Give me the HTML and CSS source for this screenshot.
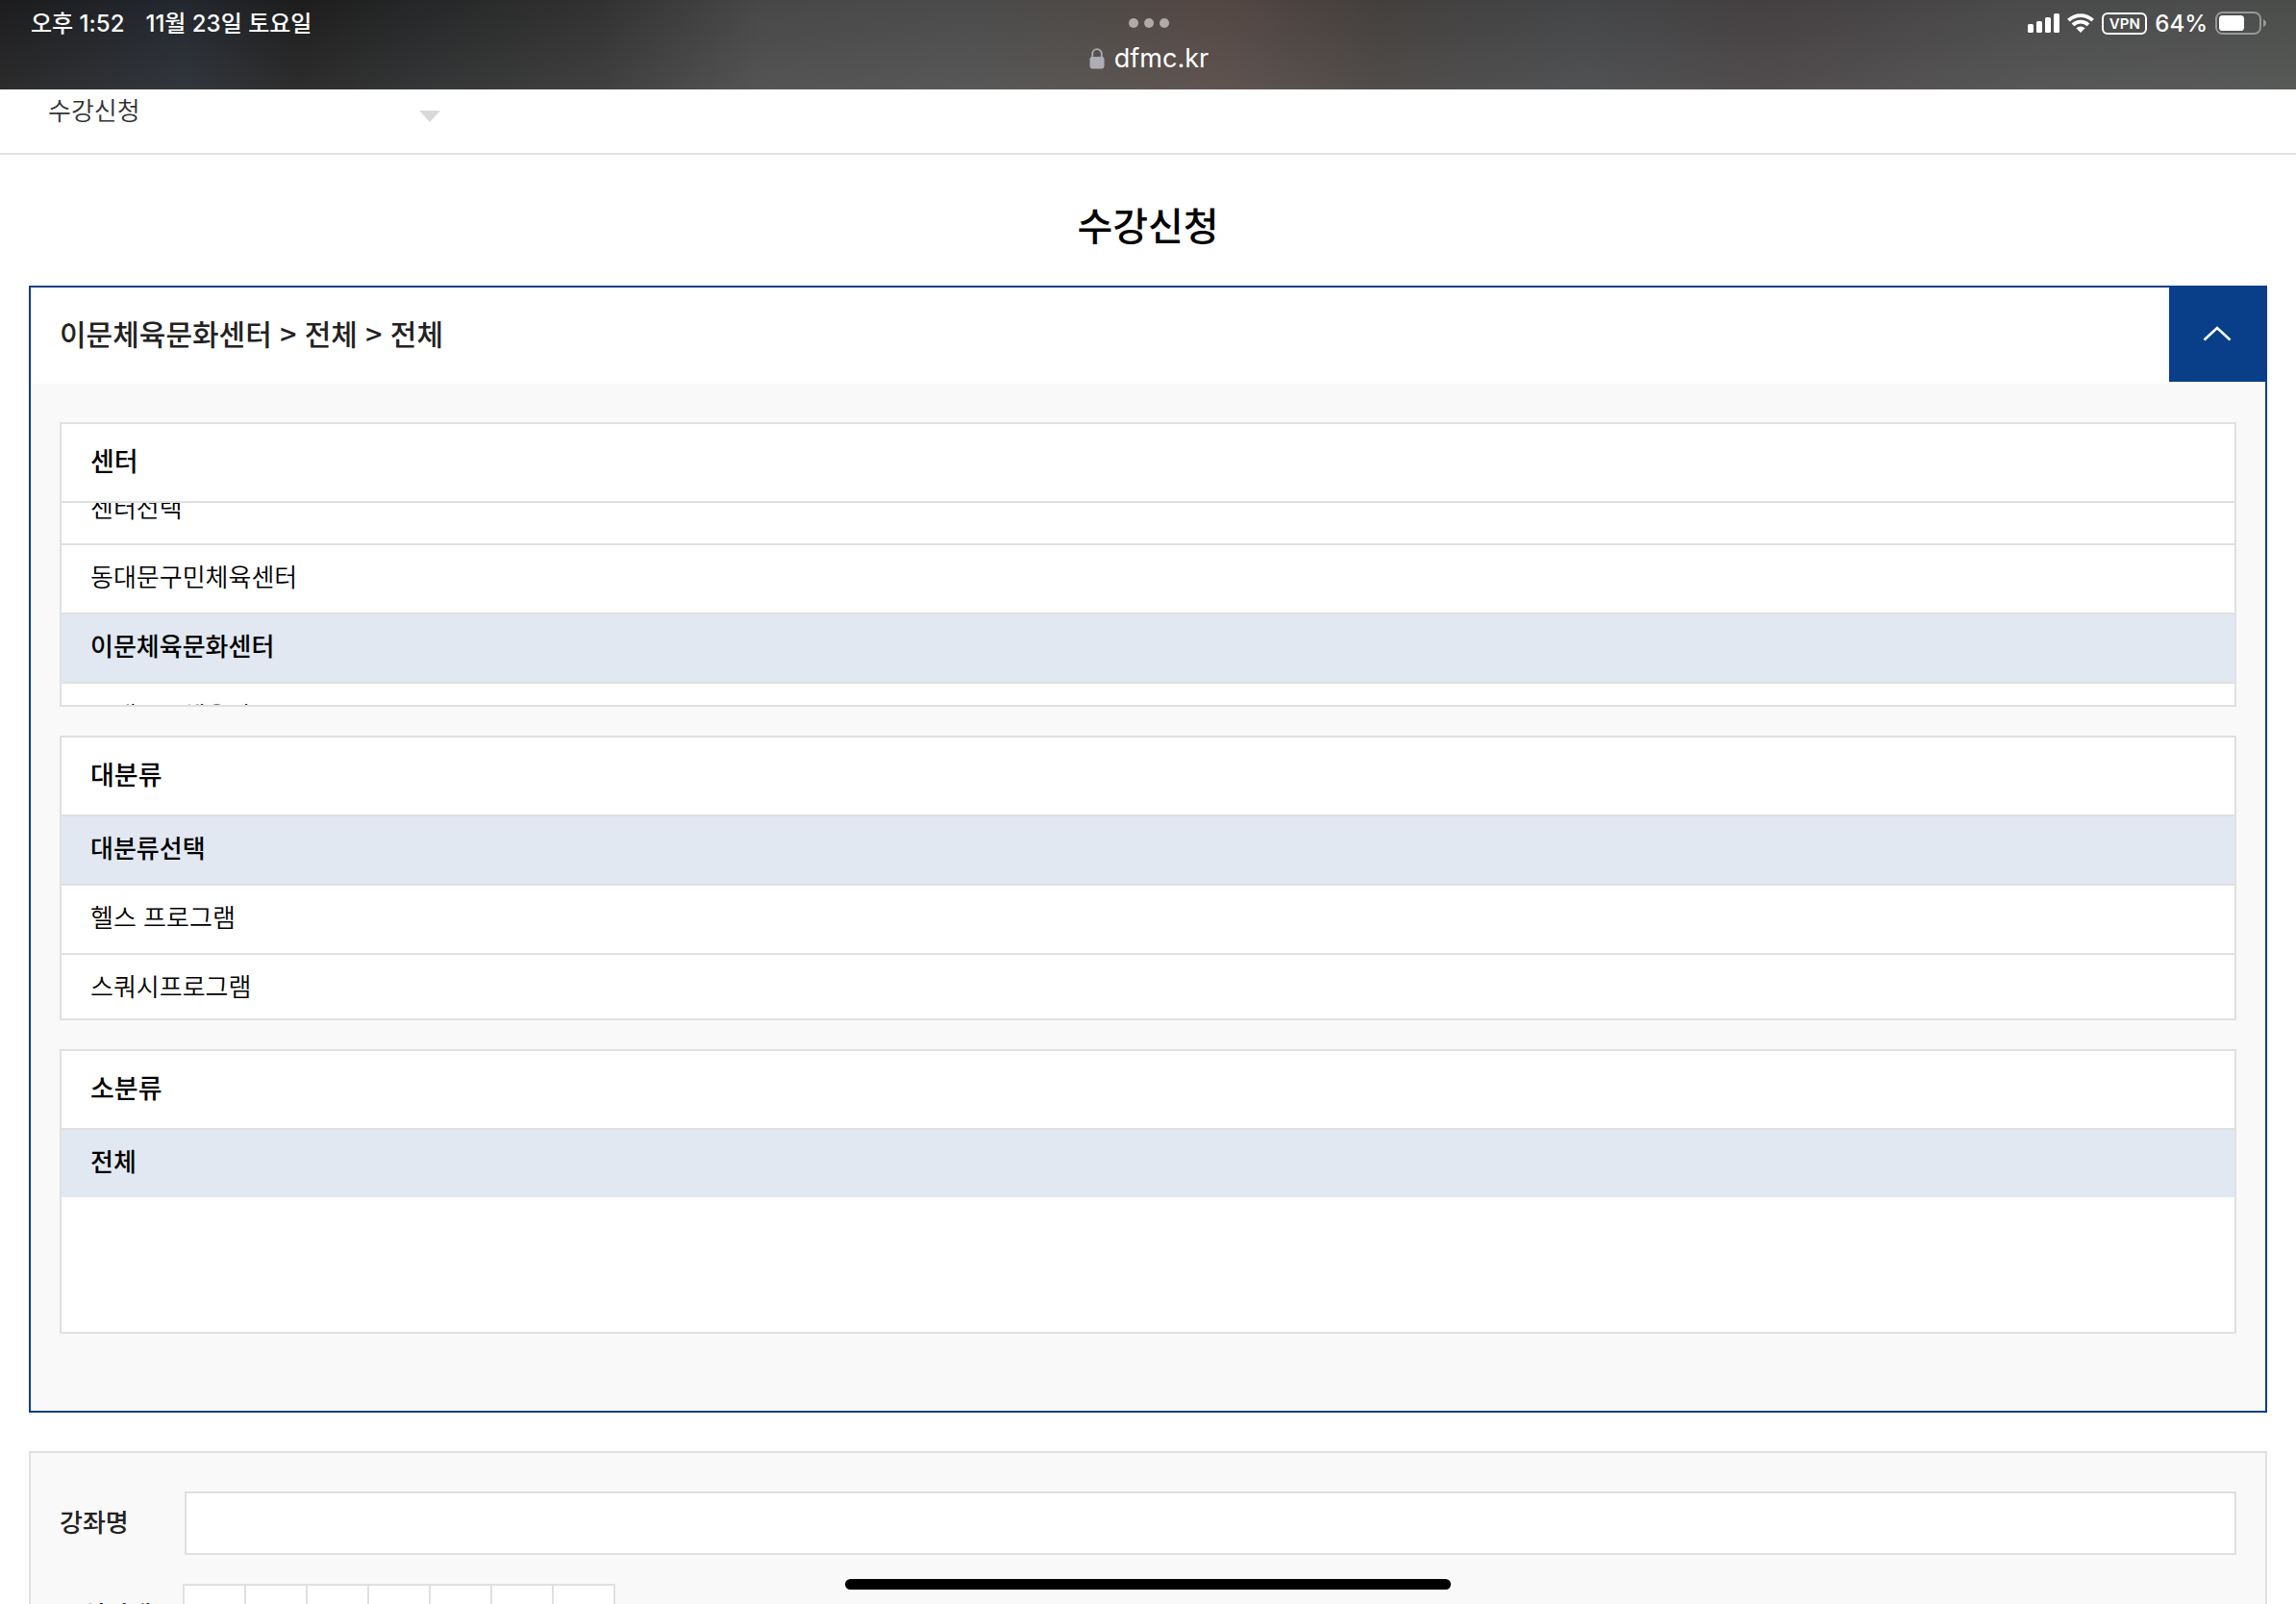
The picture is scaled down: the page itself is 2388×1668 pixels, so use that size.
FILE: index.html
```html
<!DOCTYPE html>
<html lang="ko">
<head>
    <meta charset="UTF-8">
    <title>수강신청</title>
    <link rel="stylesheet" href="styles.css">
</head>
<body>
    <header class="status-bar">
        <div class="status-left">
            <span>오후 1:52</span>
            <span>11월 23일 토요일</span>
        </div>
        <div class="status-center">
            <svg class="dots" width="42" height="10" viewBox="0 0 42 10">
                <circle cx="5" cy="5" r="5"/>
                <circle cx="21" cy="5" r="5"/>
                <circle cx="37" cy="5" r="5"/>
            </svg>
            <div class="address">
                <svg width="16" height="22" viewBox="0 0 16 22">
                    <path d="M3.2 10V6a4.8 4.8 0 0 1 9.6 0v4" fill="none" stroke="#aeacb4" stroke-width="1.8"/>
                    <rect x="0.5" y="9" width="15" height="12.5" rx="2.4" fill="#aeacb4"/>
                </svg>
                <span>dfmc.kr</span>
            </div>
        </div>
        <div class="status-right">
            <svg width="33" height="20" viewBox="0 0 33 20" fill="#fff">
                <rect x="0" y="11" width="6" height="9" rx="1.6"/>
                <rect x="9" y="8" width="6" height="12" rx="1.6"/>
                <rect x="18" y="4" width="6" height="16" rx="1.6"/>
                <rect x="27" y="0" width="6" height="20" rx="1.6"/>
            </svg>
            <svg width="28" height="20" viewBox="0 0 28 20">
                <path d="M1.4 7.2a18 18 0 0 1 25.2 0M6 11.8a11.5 11.5 0 0 1 16 0" fill="none" stroke="#fff" stroke-width="3.8"/>
                <path d="M14 20l-4.6-4.7a6.6 6.6 0 0 1 9.2 0z" fill="#fff"/>
            </svg>
            <span class="vpn">VPN</span>
            <span class="percent">64%</span>
            <svg width="54" height="24" viewBox="0 0 54 24">
                <rect x="1" y="1" width="46" height="22" rx="6.5" fill="none" stroke="#969796" stroke-width="2"/>
                <rect x="4" y="4" width="26" height="16" rx="3.6" fill="#fff"/>
                <path d="M50 8c4 1.600 4 6.400 0 8z" fill="#969796"/>
            </svg>
        </div>
    </header>

    <nav class="location">
        <div class="location-menu">
            <select aria-label="메뉴">
                <option>수강신청</option>
            </select>
            <svg width="22" height="12" viewBox="0 0 22 12"><path d="M0 0h22L11 12z" fill="#d9d9d9"/></svg>
        </div>
    </nav>

    <main class="content">
        <h1>수강신청</h1>

        <section class="finder">
            <div class="finder-top">
                <p>이문체육문화센터 &gt; 전체 &gt; 전체</p>
                <button type="button" class="toggle" aria-label="접기">
                    <svg width="30" height="16" viewBox="0 0 30 16"><path d="M1.500 14.500L15 2l13.500 12.500" fill="none" stroke="#fff" stroke-width="2.600"/></svg>
                </button>
            </div>
            <div class="finder-body">
                <div class="box">
                    <h2>센터</h2>
                    <ul id="centerList">
                        <li><a href="#">센터선택</a></li>
                        <li><a href="#">동대문구민체육센터</a></li>
                        <li class="on"><a href="#">이문체육문화센터</a></li>
                        <li><a href="#">동대문구체육관</a></li>
                    </ul>
                </div>
                <div class="box">
                    <h2>대분류</h2>
                    <ul>
                        <li class="on"><a href="#">대분류선택</a></li>
                        <li><a href="#">헬스 프로그램</a></li>
                        <li><a href="#">스쿼시프로그램</a></li>
                    </ul>
                </div>
                <div class="box">
                    <h2>소분류</h2>
                    <ul>
                        <li class="on"><a href="#">전체</a></li>
                    </ul>
                </div>
            </div>
        </section>

        <form class="search">
            <div class="row">
                <label class="name" for="lecture">강좌명</label>
                <input type="text" id="lecture" class="text">
            </div>
            <div class="row">
                <span class="name">요일선택</span>
                <div class="days">
                    <label><input type="checkbox">월</label>
                    <label><input type="checkbox">화</label>
                    <label><input type="checkbox">수</label>
                    <label><input type="checkbox">목</label>
                    <label><input type="checkbox">금</label>
                    <label><input type="checkbox">토</label>
                    <label><input type="checkbox">일</label>
                </div>
            </div>
        </form>
    </main>

    <div class="home-bar"></div>

    <script>
        // bring the selected center into view
        document.getElementById("centerList").scrollTop = 28;
    </script>
</body>
</html>
```
FILE: styles.css
```css
*
{
    margin: 0;
    padding: 0;
    box-sizing: border-box;
}

body
{
    display: flex;
    flex-direction: column;
    height: 100vh;
    overflow: hidden;
    position: relative;
    background: #fff;
    color: #000;
    font-family: "Noto Sans CJK KR", sans-serif;
    font-size: 26px;
    font-weight: 350;
}
ul
{
    list-style: none;
}
a
{
    color: inherit;
    text-decoration: none;
}
svg
{
    display: block;
}

/* status bar */
.status-bar
{
    display: grid;
    grid-template-columns: 1fr auto 1fr;
    flex: none;
    height: 93px;
    padding: 0 30px 0 32px;
    background:
        linear-gradient(to bottom, rgba(255, 255, 255, 0), rgba(255, 255, 255, 0.07)),
        linear-gradient(to right, #1c1c1d 0%, #23272e 8%, #1d1d1d 13%, #252627 18%, #313131 26%, #474747 33%, #4b4b4b 42%, #4e4946 48%, #544743 53%, #433f3d 60%, #434547 69%, #443f40 77%, #4a4a4b 88%, #4b4d4b 100%);
    color: #fff;
    font-family: Inter, "Noto Sans CJK KR", sans-serif;
    font-size: 24px;
    font-weight: 500;
}
.status-left, .status-right
{
    display: flex;
    align-items: center;
    height: 48px;
}
.status-left
{
    gap: 22px;
    padding-bottom: 4px;
}
.status-right
{
    justify-content: flex-end;
    gap: 8px;
}
.status-center
{
    display: flex;
    flex-direction: column;
    align-items: center;
    padding-top: 19px;
}
.dots
{
    fill: #b0aba8;
}
.address
{
    display: flex;
    align-items: center;
    gap: 10px;
    margin-top: 14px;
    font-size: 27px;
    font-weight: 400;
    line-height: 36px;
}
.vpn
{
    width: 47px;
    height: 23px;
    border: 2px solid #fff;
    border-radius: 6px;
    font-size: 15px;
    font-weight: 600;
    line-height: 19px;
    text-align: center;
}

/* location */
.location
{
    flex: none;
    padding: 0 50px 22px;
    border-bottom: 2px solid #e0e0e0;
}
.location-menu
{
    display: grid;
    width: 408px;
}
.location-menu select, .location-menu svg
{
    grid-area: 1 / 1;
}
.location-menu select
{
    height: 44px;
    padding-bottom: 4px;
    border: 0;
    background: none;
    color: #333;
    font: inherit;
    appearance: none;
}
.location-menu svg
{
    align-self: end;
    justify-self: end;
    margin-bottom: 10px;
    pointer-events: none;
}

/* content */
.content
{
    flex: 1;
    min-height: 0;
    padding: 0 30px;
    overflow: hidden;
}
h1
{
    padding: 42px 0 34px;
    font-size: 40px;
    font-weight: 500;
    line-height: 60px;
    text-align: center;
}
.finder
{
    border: 2px solid #083f88;
    background: #f9f9f9;
}
.finder-top
{
    display: flex;
    justify-content: space-between;
    height: 100px;
    padding-left: 30px;
    background: #fff;
    color: #222;
    font-size: 30px;
    font-weight: 500;
    line-height: 94px;
}
.toggle
{
    display: flex;
    align-items: center;
    justify-content: center;
    width: 100px;
    height: 98px;
    padding-bottom: 2px;
    border: 0;
    background: #083f88;
}
.finder-body
{
    display: flex;
    flex-direction: column;
    gap: 30px;
    padding: 40px 30px 80px;
}
.box
{
    border: 2px solid #e0e0e0;
    background: #fff;
}
.box h2
{
    padding: 0 30px 4px;
    border-bottom: 2px solid #e0e0e0;
    font-size: 27px;
    font-weight: 500;
    line-height: 76px;
}
.box ul
{
    height: 210px;
    overflow-y: auto;
    scrollbar-width: none;
}
.box li
{
    border-bottom: 2px solid #e0e0e0;
}
.box li:last-child
{
    border-bottom: 0;
}
.box li a
{
    display: block;
    padding: 0 30px 6px;
    line-height: 64px;
}
.box .on
{
    background: #e1e8f2;
    font-weight: 500;
}

/* search form */
.search
{
    display: flex;
    flex-direction: column;
    gap: 30px;
    margin-top: 40px;
    padding: 40px 30px;
    border: 2px solid #e0e0e0;
    background: #f9f9f9;
}
.row
{
    display: flex;
    align-items: center;
    height: 66px;
}
.name
{
    flex: none;
    width: 130px;
    padding-bottom: 6px;
    color: #222;
    font-weight: 500;
}
.text
{
    flex: 1;
    height: 66px;
    padding: 0 20px;
    border: 2px solid #e0e0e0;
    background: #fff;
    font: inherit;
}
.days
{
    display: flex;
}
.days label
{
    width: 66px;
    margin-left: -2px;
    border: 2px solid #e0e0e0;
    background: #fff;
    font-size: 24px;
    line-height: 62px;
    text-align: center;
}
.days input
{
    position: absolute;
    opacity: 0;
}

.home-bar
{
    position: absolute;
    left: 50%;
    bottom: 15px;
    width: 630px;
    height: 11px;
    border-radius: 6px;
    background: #000;
    transform: translateX(-50%);
}
```
